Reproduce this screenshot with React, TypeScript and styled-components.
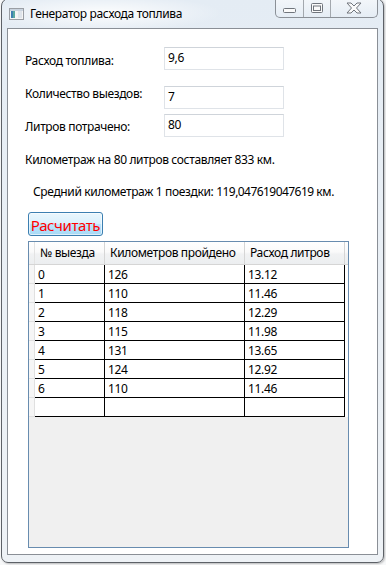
import React from 'react';
import styled, { createGlobalStyle } from 'styled-components';

const Global = createGlobalStyle`
  html, body { margin: 0; padding: 0; background: #f7f8f9; }
  body {
    width: 386px; height: 565px; overflow: hidden;
    font-family: "Noto Sans", "Open Sans", "DejaVu Sans", sans-serif;
    font-size: 12px; color: #000;
    letter-spacing: -0.35px;
  }
  * { box-sizing: border-box; }
`;

const Page = styled.div`
  width: 386px;
  height: 565px;
  padding-left: 1px;
  overflow: hidden;
`;

const Window = styled.div`
  width: 383px;
  height: 565px;
  margin-top: -2px;
  border: 1px solid #5d6167;
  border-radius: 8px 8px 7px 7px;
  background:
    radial-gradient(ellipse 120px 18px at 100px 14px, rgba(255,255,255,0.9), rgba(255,255,255,0) 100%),
    linear-gradient(180deg, #e4ecf4 0%, #e9eff5 40%, #eef2f6 100%);
  display: flex;
  flex-direction: column;
  box-shadow: 1px 1px 2px rgba(0,0,0,0.25);
`;

const TitleBar = styled.div`
  height: 29px;
  display: flex;
  align-items: flex-start;
  flex-shrink: 0;
`;

const TitleLeft = styled.div`
  display: flex;
  align-items: center;
  margin-left: 7px;
  margin-top: 7px;
  height: 16px;
`;

const TitleText = styled.span`
  margin-left: 6px;
  font-size: 12px;
  line-height: 16px;
  color: #000;
  white-space: nowrap;
`;

const CaptionGroup = styled.div`
  margin-left: auto;
  margin-right: 5px;
  height: 19px;
  display: flex;
  border: 1px solid #8b9097;
  border-top: none;
  border-radius: 0 0 5px 5px;
  overflow: hidden;
  background: linear-gradient(180deg, rgba(255,255,255,0.55), rgba(230,237,245,0.6));
`;

const CaptionButton = styled.div<{ $w: number; $last?: boolean }>`
  width: ${p => p.$w}px;
  height: 100%;
  display: flex;
  align-items: center;
  justify-content: center;
  border-right: ${p => (p.$last ? 'none' : '1px solid #a3a8ae')};
  padding-bottom: 1px;
`;

const Client = styled.div`
  flex: 1;
  margin: 0 5px 7px 5px;
  border: 1px solid #8a8f96;
  background: #fff;
  display: flex;
  flex-direction: column;
  padding: 18px 0 0 17px;
`;

const Field = styled.div<{ $top: number }>`
  display: flex;
  align-items: flex-start;
  margin-top: ${p => p.$top}px;
  height: 23px;
`;

const Label = styled.div<{ $shift: number }>`
  width: 139px;
  margin-top: ${p => p.$shift}px;
  line-height: 16px;
  white-space: nowrap;
`;

const TextBox = styled.div`
  width: 120px;
  height: 23px;
  border: 1px solid #dfe3e8;
  border-top-color: #cfd4da;
  padding: 0 3px;
  line-height: 20px;
  background: #fff;
`;

const Info = styled.div<{ $top: number; $indent?: number }>`
  margin-top: ${p => p.$top}px;
  padding-left: ${p => p.$indent ?? 0}px;
  line-height: 16px;
  white-space: nowrap;
`;

const Num = styled.span`
  letter-spacing: -0.55px;
`;

const CalcButton = styled.button`
  align-self: flex-start;
  margin: 12px 0 0 3px;
  width: 75px;
  height: 24px;
  padding: 0;
  border: 1px solid #3c7fb1;
  border-radius: 3px;
  background: linear-gradient(180deg, #eaf6fd 0%, #d9f0fc 50%, #bee6fd 51%, #a7d9f5 100%);
  box-shadow: inset 0 0 0 1px rgba(255,255,255,0.6);
  color: #ff0000;
  font-family: inherit;
  font-size: 15px;
  letter-spacing: -0.4px;
  line-height: 20px;
  padding-top: 1px;
`;

const Grid = styled.div`
  margin: 5px 0 0 3px;
  width: 321px;
  height: 307px;
  border: 1px solid #688caf;
  background: #f0f0f0;
  display: flex;
  flex-direction: column;
`;

const HeaderRow = styled.div`
  display: flex;
  height: 23px;
  background: linear-gradient(180deg, #ffffff 0%, #fafafa 45%, #f1f2f3 55%, #eceef0 100%);
  border-bottom: 1px solid #d5d5d5;
`;

const Corner = styled.div`
  width: 6px;
  border-right: 1px solid #e3e3e3;
`;

const HeaderCell = styled.div<{ $w: number }>`
  width: ${p => p.$w}px;
  padding-left: 5px;
  border-right: 1px solid #d5d5d5;
  line-height: 21px;
  white-space: nowrap;
  overflow: hidden;
`;

const Filler = styled.div`
  flex: 1;
`;

const DataRow = styled.div`
  display: flex;
  height: 19px;
`;

const RowHeader = styled.div`
  width: 6px;
  background: #f6f6f6;
  border-right: 1px solid #e0e0e0;
  border-bottom: 1px solid #e0e0e0;
`;

const Cell = styled.div<{ $w: number }>`
  width: ${p => p.$w}px;
  background: #fff;
  border-right: 1px solid #000;
  border-bottom: 1px solid #000;
  padding-left: 3px;
  line-height: 19px;
  white-space: nowrap;
`;

const RowFiller = styled.div`
  flex: 1;
  background: #fff;
`;

const TitleIcon = () => (
  <svg width="15" height="12" viewBox="0 0 15 12">
    <rect x="0.5" y="0.5" width="14" height="11" fill="#f4f4f4" stroke="#9a9ea4" />
    <rect x="1" y="1" width="13" height="2" fill="#c9d3de" />
    <rect x="2" y="3" width="4" height="7" fill="#5aa8a0" />
    <rect x="2" y="3" width="2" height="7" fill="#3d7fb0" />
    <rect x="9" y="3" width="4" height="7" fill="#dfe4ea" />
  </svg>
);

const MinIcon = () => (
  <svg width="13" height="6" viewBox="0 0 13 6" style={{ marginTop: 7 }}>
    <rect x="0.5" y="0.5" width="12" height="4" rx="1" fill="#fafafa" stroke="#70757c" />
  </svg>
);

const MaxIcon = () => (
  <svg width="12" height="10" viewBox="0 0 12 10">
    <rect x="0.5" y="0.5" width="11" height="9" rx="1" fill="#fafafa" stroke="#70757c" />
    <rect x="2.5" y="3" width="7" height="4.5" fill="none" stroke="#70757c" />
  </svg>
);

const CloseIcon = () => (
  <svg width="16" height="12" viewBox="0 0 16 12">
    <path
      d="M1 1 H5 L8 4 L11 1 H15 L10.5 6 L15 11 H11 L8 8 L5 11 H1 L5.5 6 Z"
      fill="#fafafa"
      stroke="#70757c"
      strokeWidth="1"
      strokeLinejoin="round"
    />
  </svg>
);

const rows = [
  ['0', '126', '13.12'],
  ['1', '110', '11.46'],
  ['2', '118', '12.29'],
  ['3', '115', '11.98'],
  ['4', '131', '13.65'],
  ['5', '124', '12.92'],
  ['6', '110', '11.46'],
  ['', '', ''],
];

const widths = [70, 140, 100];
const headers = ['№ выезда', 'Километров пройдено', 'Расход литров'];

export default function App() {
  return (
    <Page>
      <Global />
      <Window>
        <TitleBar>
          <TitleLeft>
            <TitleIcon />
            <TitleText>Генератор расхода топлива</TitleText>
          </TitleLeft>
          <CaptionGroup>
            <CaptionButton $w={28}><MinIcon /></CaptionButton>
            <CaptionButton $w={27}><MaxIcon /></CaptionButton>
            <CaptionButton $w={46} $last><CloseIcon /></CaptionButton>
          </CaptionGroup>
        </TitleBar>
        <Client>
          <Field $top={0}>
            <Label $shift={6}>Расход топлива:</Label>
            <TextBox>9,6</TextBox>
          </Field>
          <Field $top={16}>
            <Label $shift={0}>Количество выездов:</Label>
            <TextBox>7</TextBox>
          </Field>
          <Field $top={5}>
            <Label $shift={5}>Литров потрачено:</Label>
            <TextBox>80</TextBox>
          </Field>
          <Info $top={15}>Километраж на 80 литров составляет 833 км.</Info>
          <Info $top={16} $indent={8}>
            Средний километраж 1 поездки: <Num>119,047619047619</Num> км.
          </Info>
          <CalcButton>Расчитать</CalcButton>
          <Grid>
            <HeaderRow>
              <Corner />
              {headers.map((h, i) => (
                <HeaderCell key={h} $w={widths[i]}>{h}</HeaderCell>
              ))}
              <Filler />
            </HeaderRow>
            {rows.map((r, ri) => (
              <DataRow key={ri}>
                <RowHeader />
                {r.map((c, ci) => (
                  <Cell key={ci} $w={widths[ci]}>{c}</Cell>
                ))}
                <RowFiller />
              </DataRow>
            ))}
          </Grid>
        </Client>
      </Window>
    </Page>
  );
}
